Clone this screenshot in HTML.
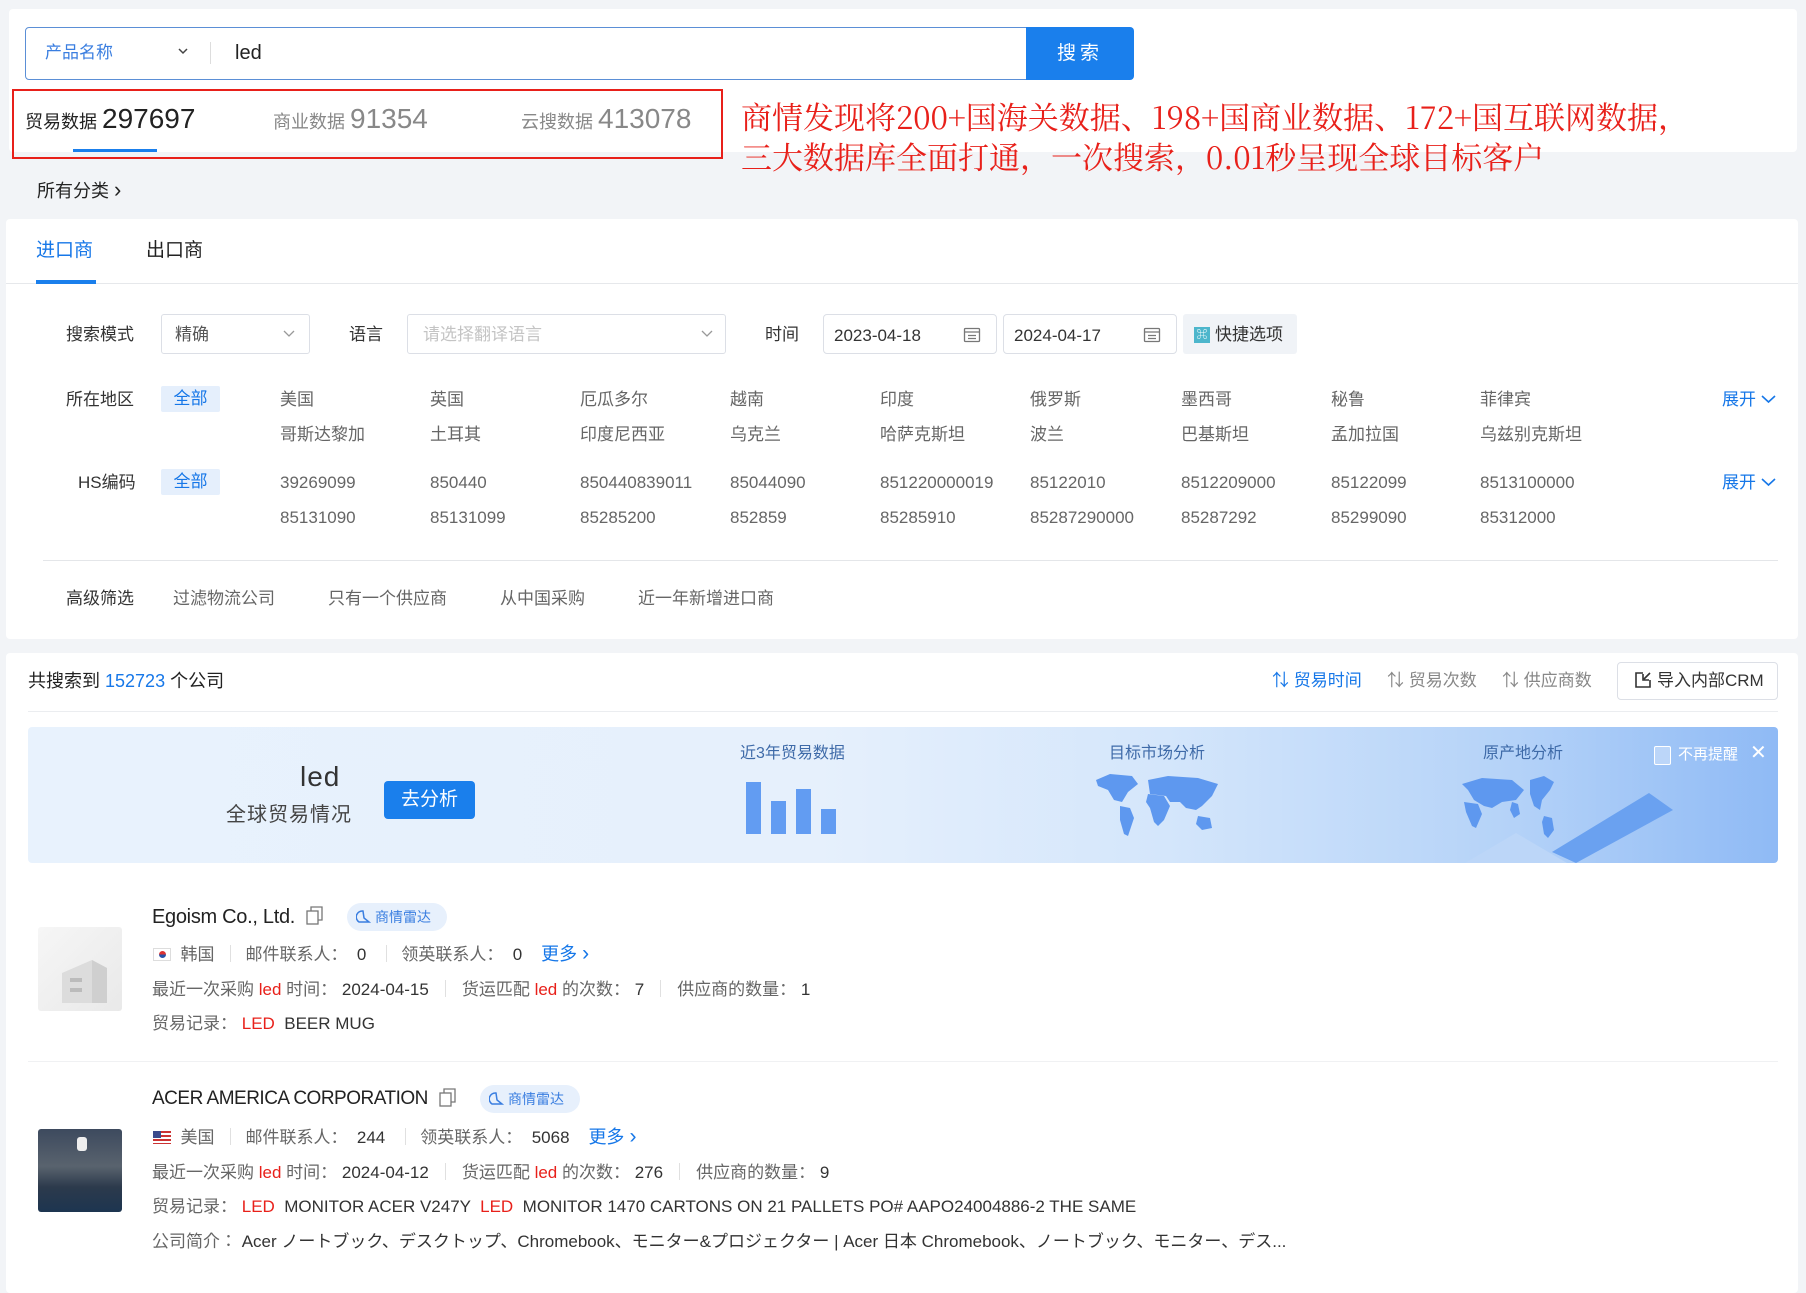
<!DOCTYPE html>
<html><head><meta charset="utf-8"><style>
*{margin:0;padding:0;box-sizing:border-box}
body{width:1806px;height:1280px;background:#f2f4f7;position:relative;overflow:hidden;font-family:"Liberation Sans","Noto Sans CJK SC",sans-serif;color:#333;font-size:17px}
.a{position:absolute;white-space:nowrap;line-height:24px}
.card{position:absolute;background:#fff;border-radius:4px}
.g{color:#666}.b{color:#1677e8}.r{color:#e8201a}.k{color:#333}
.box{position:absolute;border:1px solid #dcdfe6;border-radius:3px;background:#fff}
.tag{position:absolute;background:#e5effc;color:#1677e8;border-radius:2px;text-align:center;line-height:26px;font-size:17px}
.sep{display:inline-block;width:1px;height:17px;background:#e0e0e0;vertical-align:-2px;margin:0 14px}
.sepl{position:absolute;height:1px;background:#ebedf0}
</style></head><body>

<!-- top card -->
<div class="card" style="left:9px;top:9px;width:1788px;height:143px"></div>
<div class="box" style="left:25px;top:27px;width:1002px;height:53px;border-color:#5b8fd6;border-radius:4px 0 0 4px"></div>
<div class="a b" style="left:45px;top:41px;font-size:17px;color:#3a7ee0">产品名称</div>
<svg class="a" style="left:177px;top:46px" width="12" height="10" viewBox="0 0 12 10"><path d="M2 3l4 4 4-4" fill="none" stroke="#444" stroke-width="1.5"/></svg>
<div class="a" style="left:210px;top:42px;width:1px;height:22px;background:#ddd"></div>
<div class="a" style="left:235px;top:41px;font-size:20px;color:#222">led</div>
<div class="a" style="left:1026px;top:27px;width:108px;height:53px;background:#1a7fec;border-radius:0 4px 4px 0;color:#fff;font-size:19px;line-height:53px;text-align:center;letter-spacing:4px">搜索</div>

<div class="a" style="left:12px;top:89px;width:711px;height:70px;border:2px solid #e8201a"></div>
<div class="a" style="left:25px;top:102px;font-size:18px;color:#222;line-height:34px">贸易数据 <span style="font-size:28px">297697</span></div>
<div class="a" style="left:73px;top:149px;width:84px;height:3px;background:#1a7fec"></div>
<div class="a" style="left:273px;top:102px;font-size:18px;color:#888;line-height:34px">商业数据 <span style="font-size:28px">91354</span></div>
<div class="a" style="left:521px;top:102px;font-size:18px;color:#888;line-height:34px">云搜数据 <span style="font-size:28px">413078</span></div>

<div class="a" style="left:741px;top:96px;font-size:31px;line-height:40px;color:#e8201a;font-family:'Noto Serif CJK SC',serif;letter-spacing:0px">商情发现将200+国海关数据、198+国商业数据、172+国互联网数据，</div>
<div class="a" style="left:741px;top:136px;font-size:31px;line-height:40px;color:#e8201a;font-family:'Noto Serif CJK SC',serif;letter-spacing:0px">三大数据库全面打通，一次搜索，0.01秒呈现全球目标客户</div>

<div class="a" style="left:37px;top:178px;font-size:18px;color:#222">所有分类 <span style="font-size:22px">›</span></div>

<!-- filter card -->
<div class="card" style="left:6px;top:219px;width:1792px;height:420px"></div>
<div class="a b" style="left:36px;top:238px;font-size:19px;line-height:26px">进口商</div>
<div class="a" style="left:146px;top:238px;font-size:19px;line-height:26px;color:#222">出口商</div>
<div class="sepl" style="left:6px;top:283px;width:1792px;background:#e6e8eb"></div>
<div class="a" style="left:36px;top:280px;width:60px;height:4px;background:#1a7fec"></div>

<div class="a k" style="left:66px;top:323px">搜索模式</div>
<div class="box" style="left:161px;top:314px;width:149px;height:40px"></div>
<div class="a" style="left:175px;top:323px;color:#555">精确</div>
<svg class="a" style="left:282px;top:329px" width="14" height="10"><path d="M2 2l5 5 5-5" fill="none" stroke="#999" stroke-width="1.3"/></svg>
<div class="a k" style="left:349px;top:323px">语言</div>
<div class="box" style="left:407px;top:314px;width:319px;height:40px"></div>
<div class="a" style="left:423px;top:323px;color:#c4c4c4">请选择翻译语言</div>
<svg class="a" style="left:700px;top:329px" width="14" height="10"><path d="M2 2l5 5 5-5" fill="none" stroke="#999" stroke-width="1.3"/></svg>
<div class="a k" style="left:765px;top:323px">时间</div>
<div class="box" style="left:823px;top:314px;width:174px;height:40px;border-radius:4px"></div>
<div class="a" style="left:834px;top:324px;color:#333;font-size:17px">2023-04-18</div>
<svg class="a" style="left:963px;top:327px" width="18" height="16"><rect x="1.5" y="1.5" width="15" height="13" rx="1" fill="none" stroke="#777" stroke-width="1.3"/><path d="M1.5 5h15M5 8.5h8M5 11.5h8" stroke="#777" stroke-width="1.2"/></svg>
<div class="box" style="left:1003px;top:314px;width:174px;height:40px;border-radius:4px"></div>
<div class="a" style="left:1014px;top:324px;color:#333;font-size:17px">2024-04-17</div>
<svg class="a" style="left:1143px;top:327px" width="18" height="16"><rect x="1.5" y="1.5" width="15" height="13" rx="1" fill="none" stroke="#777" stroke-width="1.3"/><path d="M1.5 5h15M5 8.5h8M5 11.5h8" stroke="#777" stroke-width="1.2"/></svg>
<div class="a" style="left:1183px;top:314px;width:114px;height:40px;background:#f0f3f7;border-radius:3px"></div>
<div class="a" style="left:1194px;top:327px;width:16px;height:16px;background:#4db6cc;color:#fff;font-size:11px;line-height:16px;text-align:center">⌘</div>
<div class="a k" style="left:1215px;top:323px">快捷选项</div>

<div class="a k" style="left:66px;top:388px">所在地区</div>
<div class="tag" style="left:161px;top:386px;width:59px">全部</div>
<div class="a g" style="left:280px;top:388px">美国</div><div class="a g" style="left:430px;top:388px">英国</div><div class="a g" style="left:580px;top:388px">厄瓜多尔</div><div class="a g" style="left:730px;top:388px">越南</div><div class="a g" style="left:880px;top:388px">印度</div><div class="a g" style="left:1030px;top:388px">俄罗斯</div><div class="a g" style="left:1181px;top:388px">墨西哥</div><div class="a g" style="left:1331px;top:388px">秘鲁</div><div class="a g" style="left:1480px;top:388px">菲律宾</div>
<div class="a g" style="left:280px;top:423px">哥斯达黎加</div><div class="a g" style="left:430px;top:423px">土耳其</div><div class="a g" style="left:580px;top:423px">印度尼西亚</div><div class="a g" style="left:730px;top:423px">乌克兰</div><div class="a g" style="left:880px;top:423px">哈萨克斯坦</div><div class="a g" style="left:1030px;top:423px">波兰</div><div class="a g" style="left:1181px;top:423px">巴基斯坦</div><div class="a g" style="left:1331px;top:423px">孟加拉国</div><div class="a g" style="left:1480px;top:423px">乌兹别克斯坦</div>
<div class="a b" style="left:1722px;top:388px">展开 <svg width="15" height="10" style="vertical-align:1px"><path d="M1 2l6.5 6 6.5-6" fill="none" stroke="#1677e8" stroke-width="1.6"/></svg></div>

<div class="a k" style="left:78px;top:471px">HS编码</div>
<div class="tag" style="left:161px;top:469px;width:59px">全部</div>
<div class="a g" style="left:280px;top:471px">39269099</div><div class="a g" style="left:430px;top:471px">850440</div><div class="a g" style="left:580px;top:471px">850440839011</div><div class="a g" style="left:730px;top:471px">85044090</div><div class="a g" style="left:880px;top:471px">851220000019</div><div class="a g" style="left:1030px;top:471px">85122010</div><div class="a g" style="left:1181px;top:471px">8512209000</div><div class="a g" style="left:1331px;top:471px">85122099</div><div class="a g" style="left:1480px;top:471px">8513100000</div>
<div class="a g" style="left:280px;top:506px">85131090</div><div class="a g" style="left:430px;top:506px">85131099</div><div class="a g" style="left:580px;top:506px">85285200</div><div class="a g" style="left:730px;top:506px">852859</div><div class="a g" style="left:880px;top:506px">85285910</div><div class="a g" style="left:1030px;top:506px">85287290000</div><div class="a g" style="left:1181px;top:506px">85287292</div><div class="a g" style="left:1331px;top:506px">85299090</div><div class="a g" style="left:1480px;top:506px">85312000</div>
<div class="a b" style="left:1722px;top:471px">展开 <svg width="15" height="10" style="vertical-align:1px"><path d="M1 2l6.5 6 6.5-6" fill="none" stroke="#1677e8" stroke-width="1.6"/></svg></div>

<div class="sepl" style="left:43px;top:560px;width:1735px;background:#e4e6e9"></div>
<div class="a k" style="left:66px;top:587px">高级筛选</div>
<div class="a g" style="left:173px;top:587px">过滤物流公司</div>
<div class="a g" style="left:328px;top:587px">只有一个供应商</div>
<div class="a g" style="left:500px;top:587px">从中国采购</div>
<div class="a g" style="left:638px;top:587px">近一年新增进口商</div>

<!-- results card -->
<div class="card" style="left:6px;top:653px;width:1792px;height:640px"></div>
<div class="a" style="left:28px;top:669px;font-size:18px;color:#222">共搜索到 <span class="b">152723</span> 个公司</div>
<div class="a b" style="left:1272px;top:669px">⇅ 贸易时间</div>
<div class="a" style="left:1387px;top:669px;color:#888">⇅ 贸易次数</div>
<div class="a" style="left:1502px;top:669px;color:#888">⇅ 供应商数</div>
<div class="box" style="left:1617px;top:662px;width:161px;height:38px;border-radius:4px"></div>
<svg class="a" style="left:1634px;top:671px" width="18" height="18"><path d="M9 2H2v14h14V9" fill="none" stroke="#333" stroke-width="1.6"/><path d="M9 3v6h6M10 8l6-6" fill="none" stroke="#333" stroke-width="1.6"/></svg>
<div class="a k" style="left:1657px;top:669px">导入内部CRM</div>
<div class="sepl" style="left:28px;top:711px;width:1750px"></div>

<!-- banner -->
<div class="a" style="left:28px;top:727px;width:1750px;height:136px;border-radius:4px;overflow:hidden;background:linear-gradient(90deg,#e8f2fd 0%,#e6f0fc 45%,#d4e6fb 65%,#b4d2f8 85%,#8fbaf5 100%)">
<svg width="1750" height="136" style="position:absolute;left:0;top:0"><polygon points="1437,136 1488,106 1539,136" fill="#bcd6f8"/><polygon points="1524,125 1621,66 1645,83 1548,136" fill="#6aa1f0"/></svg>
</div>
<div class="a" style="left:300px;top:760px;font-size:28px;line-height:34px;color:#333;letter-spacing:1px">led</div>
<div class="a" style="left:226px;top:802px;font-size:20px;line-height:26px;color:#444;letter-spacing:1px">全球贸易情况</div>
<div class="a" style="left:384px;top:781px;width:91px;height:38px;background:#1a7fec;border-radius:4px;color:#fff;font-size:19px;line-height:38px;text-align:center">去分析</div>
<div class="a" style="left:740px;top:742px;font-size:16px;color:#3e6aa8">近3年贸易数据</div>
<div class="a" style="left:746px;top:782px;width:15px;height:52px;background:#629cf2"></div>
<div class="a" style="left:771px;top:801px;width:15px;height:33px;background:#629cf2"></div>
<div class="a" style="left:796px;top:789px;width:15px;height:45px;background:#629cf2"></div>
<div class="a" style="left:821px;top:809px;width:15px;height:25px;background:#629cf2"></div>
<div class="a" style="left:1109px;top:742px;font-size:16px;color:#3e6aa8">目标市场分析</div>
<svg class="a" style="left:1094px;top:772px" width="128" height="66" viewBox="0 0 128 66"><g fill="#5e98ef"><path d="M2 8l14-6 22 2 6 8-10 8-6 10-8-2-6-10-10-4z"/><path d="M26 34l10 2 4 10-6 18-4-2-4-14z"/><path d="M54 8l20-4 30 2 20 6-6 12-10 10-6 4-10-2-6-6-10 0-4-6-16-2z"/><path d="M54 22l16 2 6 10-6 14-6 6-4-4-4-14-4-6z"/><path d="M104 44l12 2 2 10-10 2-6-6z"/></g></svg>
<div class="a" style="left:1483px;top:742px;font-size:16px;color:#3e6aa8">原产地分析</div>
<svg class="a" style="left:1460px;top:772px" width="120" height="66" viewBox="0 0 120 66"><g fill="#5e98ef"><path d="M2 12l20-6 30 2 12 10-8 10-14 2-10 6-8-2-10-6-6-10z"/><path d="M4 30l14 2 4 10-6 14-4-2-6-14z"/><path d="M52 30l6 2 2 10-6 4-4-8z"/><path d="M70 8l14-4 10 6-4 8-8 10-2 10-6-4-4-12z"/><path d="M84 44l8 2 2 12-6 8-4-4-2-12z"/></g></svg>
<div class="a" style="left:1654px;top:746px;width:17px;height:19px;border:1px solid #fff;border-radius:2px;background:rgba(255,255,255,.3)"></div>
<div class="a" style="left:1678px;top:743px;font-size:15px;color:#fff">不再提醒</div>
<div class="a" style="left:1750px;top:741px;font-size:20px;color:#fff">✕</div>

<!-- company 1 -->
<div class="a" style="left:38px;top:927px;width:84px;height:84px;background:linear-gradient(135deg,#f6f6f6,#e9e9e9);border-radius:3px"></div>
<svg class="a" style="left:52px;top:948px" width="60" height="60"><polygon points="10,55 10,25 40,12 55,20 55,55" fill="#dcdcdc"/><polygon points="40,12 55,20 55,55 40,55" fill="#cfcfcf"/><rect x="18" y="30" width="12" height="4" fill="#bbb"/><rect x="18" y="40" width="12" height="4" fill="#bbb"/></svg>
<div class="a" style="left:152px;top:904px;font-size:20px;line-height:26px;color:#222;letter-spacing:-0.3px">Egoism Co., Ltd.</div>
<svg class="a" style="left:306px;top:906px" width="18" height="20"><rect x="1" y="5" width="11" height="13" fill="#fff" stroke="#777" stroke-width="1.3"/><path d="M5 5V1h11v13h-4" fill="none" stroke="#777" stroke-width="1.3"/></svg>
<div class="a" style="left:347px;top:903px;width:100px;height:28px;background:#e7f0fc;border-radius:14px;color:#3a7ee0;font-size:14px;line-height:28px;padding-left:28px">商情雷达</div>
<svg class="a" style="left:356px;top:909px" width="16" height="16"><path d="M3 13a6 6 0 0 1 4-11l1 7 5 4z" fill="none" stroke="#3a7ee0" stroke-width="1.5"/></svg>
<div class="a" style="left:153px;top:942px;font-size:17px"><span style="display:inline-block;width:18px;height:13px;background:#fff;border:1px solid #ddd;vertical-align:-1px;position:relative"><span style="position:absolute;left:5px;top:2px;width:7px;height:7px;border-radius:50%;background:linear-gradient(#d33 50%,#2652a8 50%)"></span></span> &nbsp;<span class="g">韩国</span><span class="sep" style="margin:0 14px 0 16px"></span><span class="g">邮件联系人：</span>&nbsp;&nbsp;0<span class="sep" style="margin:0 14px 0 20px"></span><span class="g">领英联系人：</span>&nbsp;&nbsp;0 &nbsp;&nbsp; <span class="b" style="font-size:18px">更多 <span style="font-size:21px">›</span></span></div>
<div class="a" style="left:152px;top:978px"><span class="g">最近一次采购 </span><span class="r">led</span><span class="g"> 时间：</span> 2024-04-15<span class="sep" style="margin:0 16px"></span><span class="g">货运匹配 </span><span class="r">led</span><span class="g"> 的次数：</span> 7<span class="sep" style="margin:0 16px"></span><span class="g">供应商的数量：</span> 1</div>
<div class="a" style="left:152px;top:1012px"><span class="g">贸易记录：</span> <span class="r">LED</span> &nbsp;BEER MUG</div>
<div class="sepl" style="left:28px;top:1061px;width:1750px;background:#f0f1f3"></div>

<!-- company 2 -->
<div class="a" style="left:38px;top:1129px;width:84px;height:83px;background:linear-gradient(180deg,#3d4a5e 0%,#59636e 45%,#2c3a4c 70%,#1d3550 100%);border-radius:3px"></div>
<div class="a" style="left:77px;top:1137px;width:10px;height:14px;background:#eee;border-radius:3px"></div>
<div class="a" style="left:152px;top:1086px;font-size:19px;line-height:26px;color:#222;letter-spacing:-0.5px">ACER AMERICA CORPORATION</div>
<svg class="a" style="left:439px;top:1088px" width="18" height="20"><rect x="1" y="5" width="11" height="13" fill="#fff" stroke="#777" stroke-width="1.3"/><path d="M5 5V1h11v13h-4" fill="none" stroke="#777" stroke-width="1.3"/></svg>
<div class="a" style="left:480px;top:1085px;width:100px;height:28px;background:#e7f0fc;border-radius:14px;color:#3a7ee0;font-size:14px;line-height:28px;padding-left:28px">商情雷达</div>
<svg class="a" style="left:489px;top:1091px" width="16" height="16"><path d="M3 13a6 6 0 0 1 4-11l1 7 5 4z" fill="none" stroke="#3a7ee0" stroke-width="1.5"/></svg>
<div class="a" style="left:153px;top:1125px;font-size:17px"><span style="display:inline-block;width:18px;height:13px;background:repeating-linear-gradient(#c33 0 2px,#fff 2px 4px);vertical-align:-1px;position:relative"><span style="position:absolute;left:0;top:0;width:8px;height:7px;background:#3a4a8c"></span></span> &nbsp;<span class="g">美国</span><span class="sep" style="margin:0 14px 0 16px"></span><span class="g">邮件联系人：</span>&nbsp;&nbsp;244<span class="sep" style="margin:0 14px 0 20px"></span><span class="g">领英联系人：</span>&nbsp;&nbsp;5068 &nbsp;&nbsp; <span class="b" style="font-size:18px">更多 <span style="font-size:21px">›</span></span></div>
<div class="a" style="left:152px;top:1161px"><span class="g">最近一次采购 </span><span class="r">led</span><span class="g"> 时间：</span> 2024-04-12<span class="sep" style="margin:0 16px"></span><span class="g">货运匹配 </span><span class="r">led</span><span class="g"> 的次数：</span> 276<span class="sep" style="margin:0 16px"></span><span class="g">供应商的数量：</span> 9</div>
<div class="a" style="left:152px;top:1195px"><span class="g">贸易记录：</span> <span class="r">LED</span> &nbsp;MONITOR ACER V247Y &nbsp;<span class="r">LED</span> &nbsp;MONITOR 1470 CARTONS ON 21 PALLETS PO# AAPO24004886-2 THE SAME</div>
<div class="a" style="left:152px;top:1230px;font-family:'Liberation Sans','Noto Sans CJK JP',sans-serif"><span class="g">公司简介：</span> Acer ノートブック、デスクトップ、Chromebook、モニター&amp;プロジェクター | Acer 日本 Chromebook、ノートブック、モニター、デス...</div>
</body></html>
